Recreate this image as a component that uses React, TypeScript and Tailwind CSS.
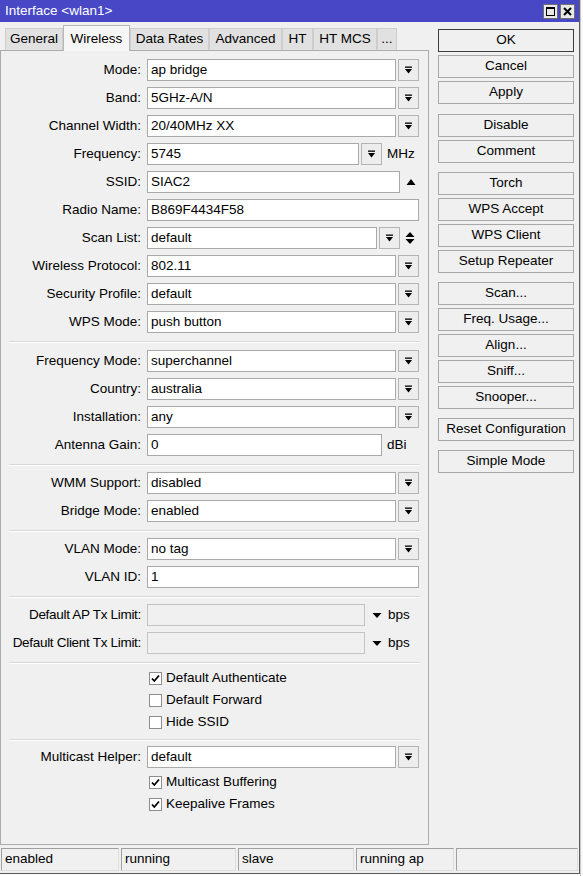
import React from 'react';

const Arrow = () => (
  <svg width="9" height="9" viewBox="0 0 9 9">
    <rect x="1" y="0.5" width="7" height="1.3" fill="#000" />
    <polygon points="1,3 8,3 4.5,7.5" fill="#000" />
  </svg>
);

const DropBtn = () => (
  <div className="ml-[2px] flex h-[22px] w-[21px] items-center justify-center border border-[#b4b4b4] bg-[#ededed]">
    <Arrow />
  </div>
);

const Field = ({ value, w, disabled }: { value?: string; w: string; disabled?: boolean }) => (
  <div
    className={`flex h-[22px] items-center border border-[#a9a9a9] pl-[3px] ${w} ${
      disabled ? 'bg-[#f0f0f0] border-[#c4c4c4]' : 'bg-white'
    }`}
  >
    {value}
  </div>
);

function Row({ label, tight, children }: { label: string; tight?: boolean; children: React.ReactNode }) {
  return (
    <div className="flex h-[28px] items-center">
      <div className={`w-[140px] shrink-0 text-right whitespace-nowrap ${tight ? 'tracking-[-0.3px]' : ''}`}>
        {label}
      </div>
      <div className="ml-[6px] flex items-center">{children}</div>
    </div>
  );
}

const Select = ({ label, value }: { label: string; value: string }) => (
  <Row label={label}>
    <Field value={value} w="w-[249px]" />
    <DropBtn />
  </Row>
);

const Sep = ({ cls = 'mt-[5px] mb-[3px]' }: { cls?: string }) => (
  <div className={`mx-[8px] border-t border-b border-t-[#d8d8d8] border-b-white ${cls}`} />
);

function Check({ label, checked }: { label: string; checked?: boolean }) {
  return (
    <div className="flex h-[22px] items-center pl-[148px]">
      <div className="flex h-[13px] w-[13px] items-center justify-center border border-[#8e8e8e] bg-white">
        {checked && (
          <svg width="11" height="11" viewBox="0 0 11 11">
            <path d="M2 5.5 L4.3 8 L9 2.5" stroke="#000" strokeWidth="1.8" fill="none" />
          </svg>
        )}
      </div>
      <span className="ml-[4px]">{label}</span>
    </div>
  );
}

const Btn = ({ label, def, cls = '' }: { label: string; def?: boolean; cls?: string }) => (
  <div
    className={`flex h-[23px] items-center justify-center border bg-[#f0f0f0] ${
      def ? 'border-[#3c3c3c]' : 'border-[#a8a8a8]'
    } ${cls}`}
  >
    {label}
  </div>
);

const tabs = [
  { name: 'General', w: 'w-[58px]' },
  { name: 'Wireless', w: 'w-[67px]', active: true },
  { name: 'Data Rates', w: 'w-[79px]' },
  { name: 'Advanced', w: 'w-[73px]' },
  { name: 'HT', w: 'w-[31px]' },
  { name: 'HT MCS', w: 'w-[64px]' },
  { name: '...', w: 'w-[20px]' },
];

export default function App() {
  return (
    <div className="flex h-[876px] w-[583px] overflow-hidden bg-white font-['Liberation_Sans',Arial,sans-serif] text-[13.5px] text-black">
      <div className="flex h-[874px] w-[580px] shrink-0 flex-col border-r border-b border-[#5a5a5a] bg-[#f0f0f0]">
        {/* title bar */}
        <div className="flex h-[22px] items-center justify-between bg-[#4848c6] pl-[5px] pr-[4px] text-white">
          <span>Interface &lt;wlan1&gt;</span>
          <div className="flex gap-[2px]">
            <div className="flex h-[15px] w-[15px] items-center justify-center border border-[#707070] bg-[#e8e8e8]">
              <div className="h-[9px] w-[9px] border border-black border-t-2" />
            </div>
            <div className="flex h-[15px] w-[15px] items-center justify-center border border-[#707070] bg-[#e8e8e8]">
              <svg width="9" height="9" viewBox="0 0 9 9">
                <path d="M1 1 L8 8 M8 1 L1 8" stroke="#000" strokeWidth="2" />
              </svg>
            </div>
          </div>
        </div>

        <div className="flex">
          {/* left: tabs + panel */}
          <div className="w-[429px] shrink-0">
            <div className="flex h-[28px] items-end pl-[5px]">
              {tabs.map((t) =>
                t.active ? (
                  <div
                    key={t.name}
                    className={`relative z-10 -mb-px flex h-[26px] items-start justify-center border border-b-0 border-[#b8b8b8] bg-[#f6f6f6] pt-[3px] ${t.w}`}
                  >
                    {t.name}
                  </div>
                ) : (
                  <div
                    key={t.name}
                    className={`flex h-[22px] items-center justify-center border border-b-0 border-[#cdcdcd] bg-[#e1e1e1] ${t.w}`}
                  >
                    {t.name}
                  </div>
                )
              )}
            </div>
            <div className="h-[795px] border border-[#acacac] pt-[5px]">
              <Select label="Mode:" value="ap bridge" />
              <Select label="Band:" value="5GHz-A/N" />
              <Select label="Channel Width:" value="20/40MHz XX" />
              <Row label="Frequency:">
                <Field value="5745" w="w-[212px]" />
                <DropBtn />
                <span className="ml-[5px]">MHz</span>
              </Row>
              <Row label="SSID:">
                <Field value="SIAC2" w="w-[253px]" />
                <svg className="ml-[6px]" width="10" height="8" viewBox="0 0 10 8">
                  <polygon points="0.5,7 9.5,7 5,1" fill="#000" />
                </svg>
              </Row>
              <Row label="Radio Name:">
                <Field value="B869F4434F58" w="w-[272px]" />
              </Row>
              <Row label="Scan List:">
                <Field value="default" w="w-[230px]" />
                <DropBtn />
                <svg className="ml-[5px]" width="10" height="14" viewBox="0 0 10 14">
                  <polygon points="0.5,6 9.5,6 5,1" fill="#000" />
                  <polygon points="0.5,8 9.5,8 5,13" fill="#000" />
                </svg>
              </Row>
              <Select label="Wireless Protocol:" value="802.11" />
              <Select label="Security Profile:" value="default" />
              <Select label="WPS Mode:" value="push button" />

              <Sep cls="mt-[5px] mb-[4px]" />
              <Select label="Frequency Mode:" value="superchannel" />
              <Select label="Country:" value="australia" />
              <Select label="Installation:" value="any" />
              <Row label="Antenna Gain:">
                <Field value="0" w="w-[235px]" />
                <span className="ml-[5px]">dBi</span>
              </Row>

              <Sep />
              <Select label="WMM Support:" value="disabled" />
              <Select label="Bridge Mode:" value="enabled" />

              <Sep />
              <Select label="VLAN Mode:" value="no tag" />
              <Row label="VLAN ID:">
                <Field value="1" w="w-[272px]" />
              </Row>

              <Sep />
              <Row label="Default AP Tx Limit:" tight>
                <Field w="w-[218px]" disabled />
                <svg className="ml-[7px]" width="10" height="7" viewBox="0 0 10 7">
                  <polygon points="0.5,1 9.5,1 5,6" fill="#000" />
                </svg>
                <span className="ml-[6px]">bps</span>
              </Row>
              <Row label="Default Client Tx Limit:" tight>
                <Field w="w-[218px]" disabled />
                <svg className="ml-[7px]" width="10" height="7" viewBox="0 0 10 7">
                  <polygon points="0.5,1 9.5,1 5,6" fill="#000" />
                </svg>
                <span className="ml-[6px]">bps</span>
              </Row>

              <Sep />
              <Check label="Default Authenticate" checked />
              <Check label="Default Forward" />
              <Check label="Hide SSID" />

              <Sep cls="mt-[6px] mb-[2px]" />
              <Select label="Multicast Helper:" value="default" />
              <Check label="Multicast Buffering" checked />
              <Check label="Keepalive Frames" checked />
            </div>
          </div>

          {/* right: buttons */}
          <div className="ml-[9px] flex w-[136px] shrink-0 flex-col gap-[3px] pt-[7px]">
            <Btn label="OK" def />
            <Btn label="Cancel" />
            <Btn label="Apply" />
            <Btn label="Disable" cls="mt-[7px]" />
            <Btn label="Comment" />
            <Btn label="Torch" cls="mt-[6px]" />
            <Btn label="WPS Accept" />
            <Btn label="WPS Client" />
            <Btn label="Setup Repeater" />
            <Btn label="Scan..." cls="mt-[6px]" />
            <Btn label="Freq. Usage..." />
            <Btn label="Align..." />
            <Btn label="Sniff..." />
            <Btn label="Snooper..." />
            <Btn label="Reset Configuration" cls="mt-[6px]" />
            <Btn label="Simple Mode" cls="mt-[6px]" />
          </div>
        </div>

        {/* status bar */}
        <div className="mt-[3px] flex h-[23px] gap-[2px] px-[1px]">
          {[
            { t: 'enabled', w: 'w-[118px]' },
            { t: 'running', w: 'w-[115px]' },
            { t: 'slave', w: 'w-[116px]' },
            { t: 'running ap', w: 'w-[98px]' },
            { t: '', w: 'flex-1' },
          ].map((c, i) => (
            <div
              key={i}
              className={`flex items-center border border-t-[#a0a0a0] border-l-[#a0a0a0] border-r-[#dedede] border-b-[#dedede] pl-[3px] ${c.w}`}
            >
              {c.t}
            </div>
          ))}
        </div>
      </div>
      <div className="flex-1 border-l border-[#c8c8c8] bg-[#f8f8f8]" />
    </div>
  );
}
